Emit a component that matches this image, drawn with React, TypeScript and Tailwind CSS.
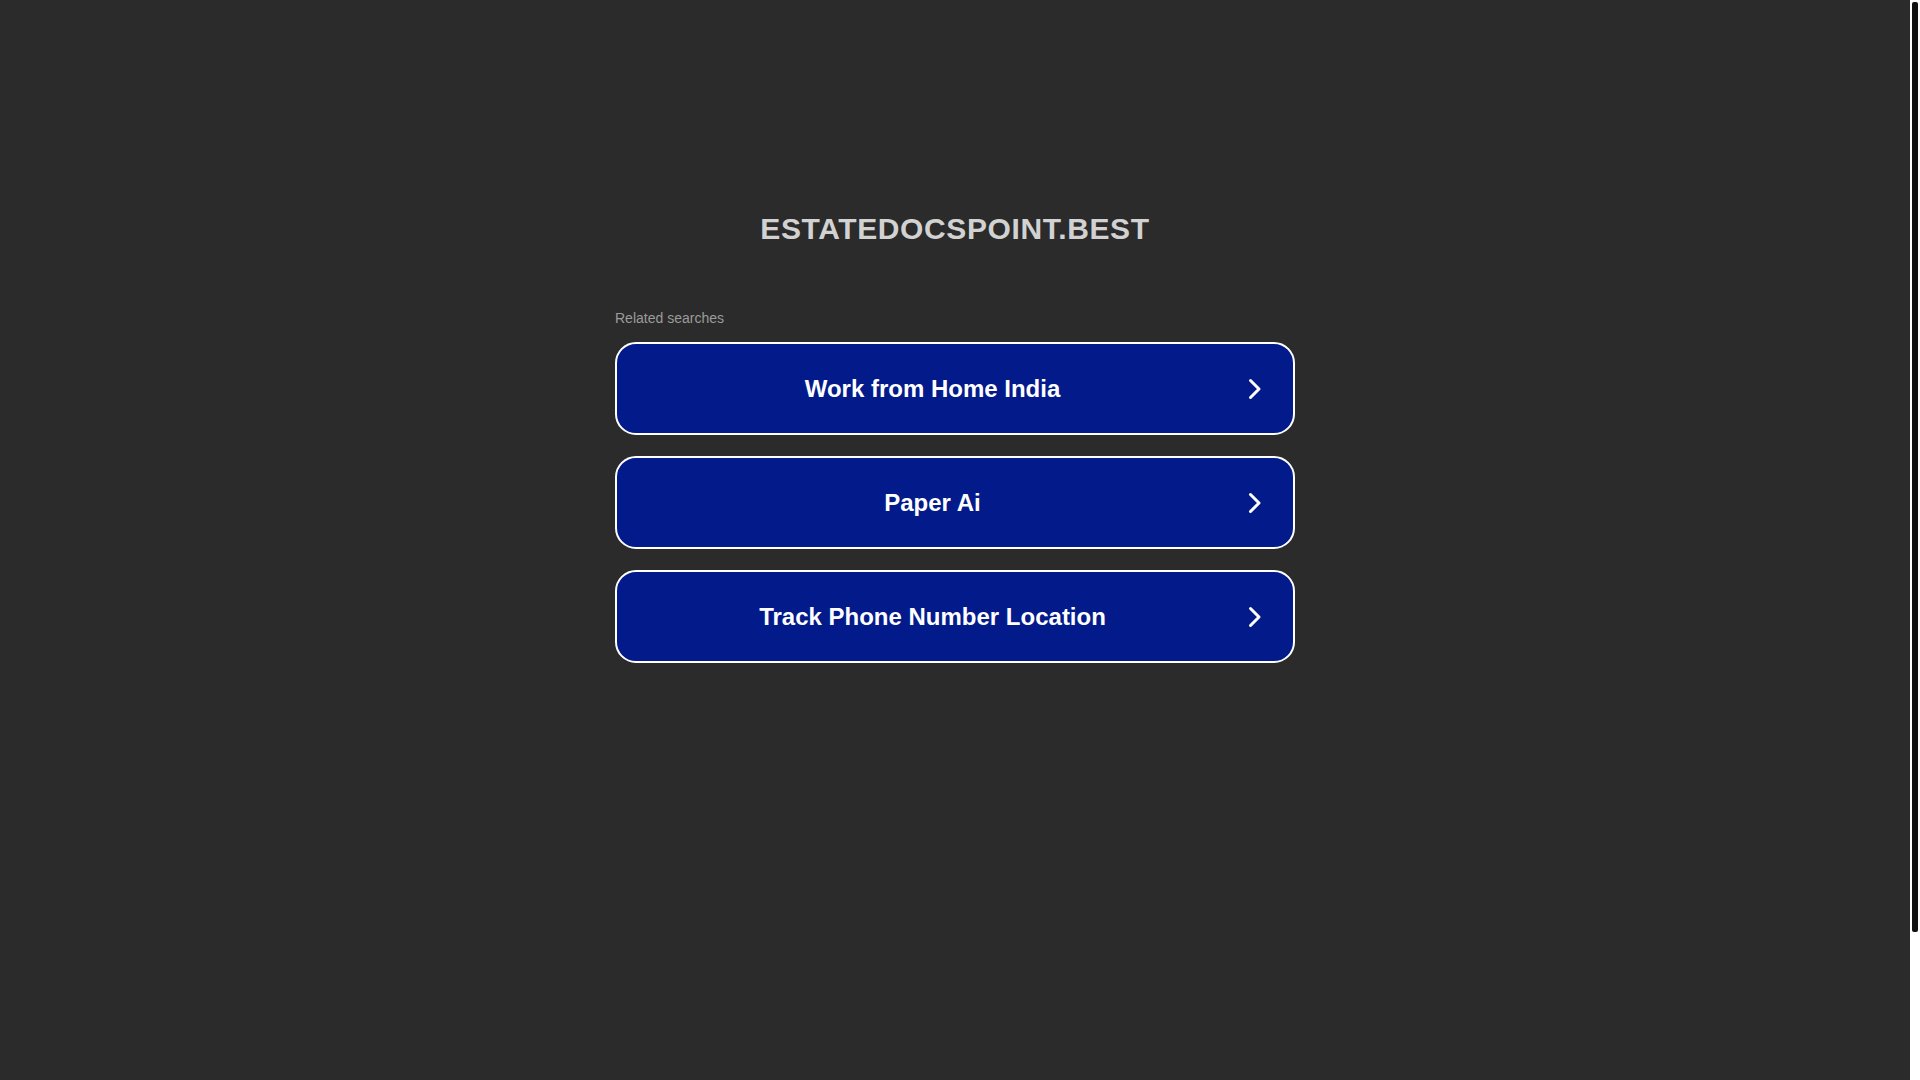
const searches = ["Work from Home India", "Paper Ai", "Track Phone Number Location"];

function Chevron() {
  return (
    <svg width="14" height="22" viewBox="0 0 14 22" fill="none" className="shrink-0">
      <polyline
        points="2.5,2.5 11,11 2.5,19.5"
        stroke="#ffffff"
        strokeWidth="3"
        strokeLinecap="round"
        strokeLinejoin="round"
      />
    </svg>
  );
}

export default function App() {
  return (
    <div
      className="flex h-screen overflow-hidden bg-[#2b2b2b]"
      style={{ fontFamily: '"Liberation Sans", Arial, sans-serif' }}
    >
      <main className="flex-1">
        <div className="w-[680px] mx-auto pt-[211px]">
          <h1 className="text-center text-[30px] leading-[36px] font-bold text-[#d2d2d2] tracking-[0.6px]">
            ESTATEDOCSPOINT.BEST
          </h1>

          <p className="mt-[61px] text-[14px] leading-[20px] text-[#9b9b9b]">Related searches</p>

          <div className="mt-[14px] flex flex-col gap-[21px]">
            {searches.map((s) => (
              <a
                key={s}
                href="#"
                className="flex items-center h-[93px] rounded-[21px] border-2 border-white bg-[#021a8a] pr-[31px]"
              >
                <span className="flex-1 text-center text-[24px] font-bold text-white">{s}</span>
                <Chevron />
              </a>
            ))}
          </div>
        </div>
      </main>

      {/* page scrollbar as it shows in the capture */}
      <div className="w-[10px] shrink-0 bg-white pt-[2px] pl-[2px] pr-[2px]">
        <div className="h-[930px] rounded-[2px] bg-[#111111]" />
      </div>
    </div>
  );
}
